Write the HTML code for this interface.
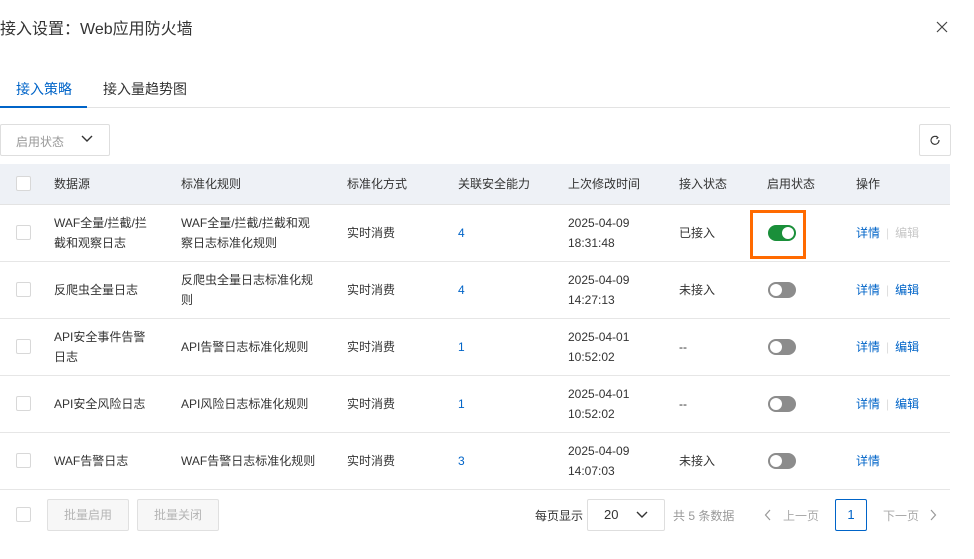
<!DOCTYPE html>
<html><head><meta charset="utf-8"><style>
*{margin:0;padding:0;box-sizing:border-box}
body{width:974px;height:559px;background:#fff;font-family:"Liberation Sans","Noto Sans CJK SC",sans-serif;color:#333;font-size:12px;position:relative;overflow:hidden}
.a{position:absolute}
.cb{position:absolute;width:15px;height:15px;border:1px solid #d8d8d8;border-radius:2px;background:#fff}
.row{position:absolute;left:0;width:950px;height:57px;border-bottom:1px solid #e6e6e6}
.c{position:absolute;top:0;height:56px;display:flex;align-items:center;line-height:20px;font-size:12px;color:#333}
.blue{color:#0064c8}
.sw{position:absolute;width:28px;height:16px;border-radius:8px;background:#8c8c8c}
.sw::after{content:"";position:absolute;top:2px;left:2px;width:12px;height:12px;border-radius:50%;background:#fff}
.sw.on{background:#1a8f3a}
.sw.on::after{left:14px}
.hd{position:absolute;top:0;height:40px;line-height:40px;font-size:12px;color:#333}
.btn{position:absolute;border:1px solid #e0e0e0;border-radius:2px;background:#f7f7f7;color:#b5b5b5;font-size:12px;text-align:center;line-height:30px}
</style></head><body>
<div class="a" style="left:0;top:15px;font-size:16px;color:#333">接入设置：Web应用防火墙</div>
<svg class="a" style="left:936px;top:21px" width="12" height="12"><path d="M1 1l10 10M11 1L1 11" stroke="#444" stroke-width="1.2"/></svg>
<div class="a" style="left:16px;top:79px;font-size:14px;color:#0064c8">接入策略</div>
<div class="a" style="left:103px;top:79px;font-size:14px;color:#333">接入量趋势图</div>
<div class="a" style="left:0;top:107px;width:950px;height:1px;background:#e3e3e3"></div>
<div class="a" style="left:0;top:106px;width:87px;height:2px;background:#0064c8"></div>
<div class="a" style="left:0;top:124px;width:110px;height:32px;border:1px solid #dedede;border-radius:2px"></div>
<div class="a" style="left:16px;top:133px;color:#999;font-size:12px">启用状态</div>
<svg class="a" style="left:80px;top:134px" width="14" height="10"><path d="M2 2l5 5 5-5" fill="none" stroke="#333" stroke-width="1.4"/></svg>
<div class="a" style="left:919px;top:124px;width:32px;height:32px;border:1px solid #dedede;border-radius:2px"></div>
<svg class="a" style="left:929px;top:134px" width="12" height="12"><path d="M8.5 3.2A4 4 0 1 0 10 6" fill="none" stroke="#333" stroke-width="1.1"/><path d="M7 2l2 1.5-1.5 1.5" fill="none" stroke="#333" stroke-width="1"/></svg>
<div class="a" style="left:0;top:164px;width:950px;height:41px;background:#eef1f6;border-bottom:1px solid #e3e3e3">
<div class="cb" style="left:16px;top:12px"></div>
<div class="hd" style="left:54px">数据源</div>
<div class="hd" style="left:181px">标准化规则</div>
<div class="hd" style="left:347px">标准化方式</div>
<div class="hd" style="left:458px">关联安全能力</div>
<div class="hd" style="left:568px">上次修改时间</div>
<div class="hd" style="left:679px">接入状态</div>
<div class="hd" style="left:767px">启用状态</div>
<div class="hd" style="left:856px">操作</div>
</div>

<div class="row" style="top:205px">
<div class="cb" style="left:16px;top:20px"></div>
<div class="c" style="left:54px;width:110px">WAF全量/拦截/拦<br>截和观察日志</div>
<div class="c" style="left:181px;width:150px">WAF全量/拦截/拦截和观<br>察日志标准化规则</div>
<div class="c" style="left:347px">实时消费</div>
<div class="c blue" style="left:458px">4</div>
<div class="c" style="left:568px">2025-04-09<br>18:31:48</div>
<div class="c" style="left:679px">已接入</div>
<div class="a" style="left:750px;top:5px;width:56px;height:49px;border:3px solid #ff6a00"></div>
<div class="sw on" style="left:768px;top:20px"></div>
<div class="c" style="left:856px"><span class="blue">详情</span><span style="color:#ddd;margin:0 6px">|</span><span style="color:#c8c8c8">编辑</span></div>
</div>
<div class="row" style="top:262px">
<div class="cb" style="left:16px;top:20px"></div>
<div class="c" style="left:54px">反爬虫全量日志</div>
<div class="c" style="left:181px;width:150px">反爬虫全量日志标准化规<br>则</div>
<div class="c" style="left:347px">实时消费</div>
<div class="c blue" style="left:458px">4</div>
<div class="c" style="left:568px">2025-04-09<br>14:27:13</div>
<div class="c" style="left:679px">未接入</div>
<div class="sw" style="left:768px;top:20px"></div>
<div class="c" style="left:856px"><span class="blue">详情</span><span style="color:#ddd;margin:0 6px">|</span><span class="blue">编辑</span></div>
</div>
<div class="row" style="top:319px">
<div class="cb" style="left:16px;top:20px"></div>
<div class="c" style="left:54px">API安全事件告警<br>日志</div>
<div class="c" style="left:181px">API告警日志标准化规则</div>
<div class="c" style="left:347px">实时消费</div>
<div class="c blue" style="left:458px">1</div>
<div class="c" style="left:568px">2025-04-01<br>10:52:02</div>
<div class="c" style="left:679px">--</div>
<div class="sw" style="left:768px;top:20px"></div>
<div class="c" style="left:856px"><span class="blue">详情</span><span style="color:#ddd;margin:0 6px">|</span><span class="blue">编辑</span></div>
</div>
<div class="row" style="top:376px">
<div class="cb" style="left:16px;top:20px"></div>
<div class="c" style="left:54px">API安全风险日志</div>
<div class="c" style="left:181px">API风险日志标准化规则</div>
<div class="c" style="left:347px">实时消费</div>
<div class="c blue" style="left:458px">1</div>
<div class="c" style="left:568px">2025-04-01<br>10:52:02</div>
<div class="c" style="left:679px">--</div>
<div class="sw" style="left:768px;top:20px"></div>
<div class="c" style="left:856px"><span class="blue">详情</span><span style="color:#ddd;margin:0 6px">|</span><span class="blue">编辑</span></div>
</div>
<div class="row" style="top:433px">
<div class="cb" style="left:16px;top:20px"></div>
<div class="c" style="left:54px">WAF告警日志</div>
<div class="c" style="left:181px">WAF告警日志标准化规则</div>
<div class="c" style="left:347px">实时消费</div>
<div class="c blue" style="left:458px">3</div>
<div class="c" style="left:568px">2025-04-09<br>14:07:03</div>
<div class="c" style="left:679px">未接入</div>
<div class="sw" style="left:768px;top:20px"></div>
<div class="c blue" style="left:856px">详情</div>
</div>

<div class="cb" style="left:16px;top:507px"></div>
<div class="btn" style="left:47px;top:499px;width:82px;height:32px">批量启用</div>
<div class="btn" style="left:137px;top:499px;width:82px;height:32px">批量关闭</div>
<div class="a" style="left:535px;top:507px;color:#333">每页显示</div>
<div class="a" style="left:587px;top:499px;width:78px;height:32px;border:1px solid #dedede;border-radius:2px"></div>
<div class="a" style="left:604px;top:507px;font-size:13px;color:#333">20</div>
<svg class="a" style="left:635px;top:510px" width="14" height="10"><path d="M2 2l5 5 5-5" fill="none" stroke="#333" stroke-width="1.4"/></svg>
<div class="a" style="left:673px;top:507px;color:#999">共 5 条数据</div>
<svg class="a" style="left:764px;top:509px" width="8" height="12"><path d="M6 1L1.5 6 6 11" fill="none" stroke="#999" stroke-width="1.2"/></svg>
<div class="a" style="left:783px;top:507px;color:#aaa">上一页</div>
<div class="a" style="left:835px;top:499px;width:32px;height:32px;border:1px solid #0064c8;border-radius:2px;color:#0064c8;text-align:center;line-height:30px;font-size:13px">1</div>
<div class="a" style="left:883px;top:507px;color:#aaa">下一页</div>
<svg class="a" style="left:929px;top:509px" width="8" height="12"><path d="M2 1l4.5 5L2 11" fill="none" stroke="#999" stroke-width="1.2"/></svg>
</body></html>
